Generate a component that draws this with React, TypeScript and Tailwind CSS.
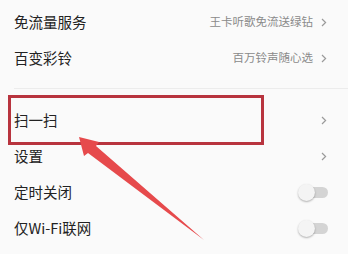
import React from "react";

const Chevron = () => (
  <svg width="6" height="9" viewBox="0 0 6 9" className="ml-[8px]">
    <path d="M1 1 L4.6 4.5 L1 8" fill="none" stroke="#9a9a9a" strokeWidth="1.2" />
  </svg>
);

const Toggle = () => (
  <div className="relative w-[30px] h-[17px] flex items-center">
    <div className="absolute left-[2px] right-0 h-[11px] rounded-full bg-[#d4d4d4]" />
    <div className="absolute left-0 w-[17px] h-[17px] rounded-full bg-[#f4f4f4] shadow-[0_1px_2px_rgba(0,0,0,0.3)]" />
  </div>
);

const Row = ({ label, right, kind }: { label: string; right?: string; kind: "chev" | "toggle" }) => (
  <div className="h-[36px] flex items-center pl-[14px] pr-[21px]">
    <span className="flex-1 text-[14.5px] text-[#222]">{label}</span>
    {right && <span className="text-[11.5px] text-[#8a8a8a]">{right}</span>}
    {kind === "chev" ? <Chevron /> : <Toggle />}
  </div>
);

export default function App() {
  return (
    <div
      className="relative w-[348px] h-[254px] overflow-hidden bg-[#fafafa]"
      style={{ fontFamily: '"Noto Sans CJK SC", "Noto Sans", sans-serif' }}
    >
      <div className="pt-[4px]">
        <Row label="免流量服务" right="王卡听歌免流送绿钻" kind="chev" />
        <Row label="百变彩铃" right="百万铃声随心选" kind="chev" />
        <div className="mt-[12px] ml-[14px] h-px bg-[#ececec]" />
        <div className="mt-[13px]">
          <Row label="扫一扫" kind="chev" />
          <Row label="设置" kind="chev" />
          <div className="h-[36px] flex items-center pl-[14px] pr-[20px]">
            <span className="flex-1 text-[14.5px] text-[#222]">定时关闭</span>
            <Toggle />
          </div>
          <div className="h-[36px] flex items-center pl-[14px] pr-[20px]">
            <span className="flex-1 text-[14.5px] text-[#222]">仅Wi-Fi联网</span>
            <Toggle />
          </div>
        </div>
      </div>
      <div className="absolute left-[8px] top-[95px] w-[256px] h-[50px] border-[3px] border-[#b8343e]" />
      <svg className="absolute left-0 top-0" width="348" height="254" viewBox="0 0 348 254">
        <polygon
          points="79,137 99,142 96,146 204,240 88,153 84,156"
          fill="#e64a4c"
        />
      </svg>
    </div>
  );
}
